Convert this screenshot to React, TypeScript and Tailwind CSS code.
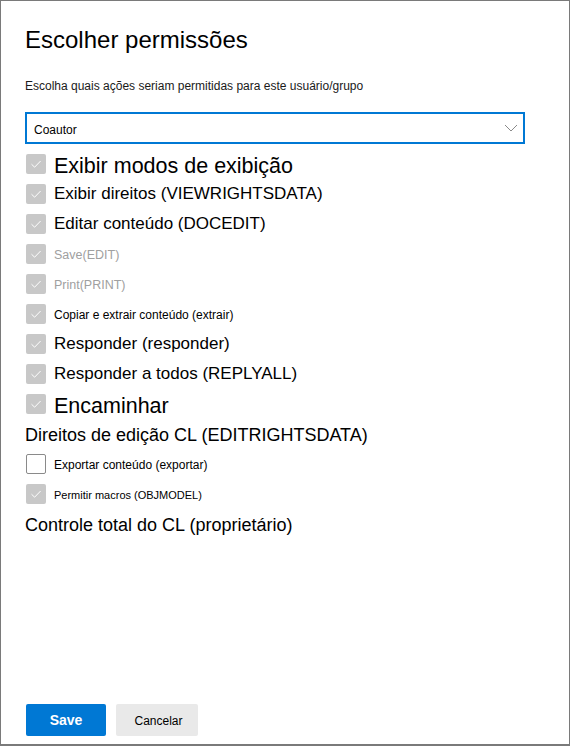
import React from "react";

type Item = {
  label: string;
  size: "lg" | "md" | "sm" | "xs" | "xxs";
  checked?: boolean;
  muted?: boolean;
  header?: boolean;
};

const items: Item[] = [
  { label: "Exibir modos de exibição", size: "lg", checked: true },
  { label: "Exibir direitos (VIEWRIGHTSDATA)", size: "md", checked: true },
  { label: "Editar conteúdo (DOCEDIT)", size: "md", checked: true },
  { label: "Save(EDIT)", size: "sm", checked: true, muted: true },
  { label: "Print(PRINT)", size: "sm", checked: true, muted: true },
  { label: "Copiar e extrair conteúdo (extrair)", size: "xs", checked: true },
  { label: "Responder (responder)", size: "md", checked: true },
  { label: "Responder a todos (REPLYALL)", size: "md", checked: true },
  { label: "Encaminhar", size: "lg", checked: true },
  { label: "Direitos de edição CL (EDITRIGHTSDATA)", size: "md", header: true },
  { label: "Exportar conteúdo (exportar)", size: "xs", checked: false },
  { label: "Permitir macros (OBJMODEL)", size: "xxs", checked: true },
  { label: "Controle total do CL (proprietário)", size: "md", header: true },
];

const sizeClass = {
  lg: "text-[21.5px] pt-[3px]",
  md: "text-[17px]",
  sm: "text-[12.5px] pt-px",
  xs: "text-[12px] pt-px",
  xxs: "text-[11px] pt-px",
};

function Box({ checked }: { checked?: boolean }) {
  if (!checked) {
    return <span className="ml-px w-5 h-5 shrink-0 rounded-[2px] border border-[#8a8a8a] bg-white" />;
  }
  return (
    <span className="ml-px w-5 h-5 shrink-0 rounded-[2px] bg-[#c8c8c8] flex items-center justify-center">
      <svg width="20" height="20" viewBox="0 0 20 20" fill="none">
        <path d="M5.5 10.2 L8.6 13.2 L14.6 7" stroke="#ffffff" strokeWidth="1" />
      </svg>
    </span>
  );
}

export default function App() {
  return (
    <main
      className="w-[570px] h-[746px] bg-white border border-b-2 border-[#7a7a7a] flex flex-col px-6 text-black"
      style={{ fontFamily: '"Liberation Sans", Arial, sans-serif' }}
    >
      <h1 className="mt-[25px] text-[24px] leading-[28px]">Escolher permissões</h1>
      <p className="mt-[24px] text-[12px] leading-4 text-[#1a1a1a]">
        Escolha quais ações seriam permitidas para este usuário/grupo
      </p>

      <div className="mt-[18px] w-[500px] h-8 border-2 border-[#0078d4] flex items-center justify-between pl-[7px] pr-[5px]">
        <span className="text-[12px] pt-[3px]">Coautor</span>
        <svg width="14" height="8" viewBox="0 0 14 8" fill="none">
          <path d="M1 1 L7 7 L13 1" stroke="#8a8a8a" strokeWidth="1" />
        </svg>
      </div>

      <ul className="mt-[10px] flex flex-col gap-[10px]">
        {items.map((item, i) => (
          <li key={i} className="h-5 flex items-center">
            {item.header ? (
              <span className="text-[18px] leading-5 pt-[2px] whitespace-nowrap">{item.label}</span>
            ) : (
              <>
                <Box checked={item.checked} />
                <span
                  className={`ml-2 leading-5 whitespace-nowrap ${sizeClass[item.size]} ${
                    item.muted ? "text-[#a0a0a0]" : "text-black"
                  }`}
                >
                  {item.label}
                </span>
              </>
            )}
          </li>
        ))}
      </ul>

      <div className="mt-auto mb-[8px] flex gap-[10px] ml-px">
        <button className="w-20 h-8 rounded-[2px] bg-[#0078d4] text-white text-[14px] font-bold">Save</button>
        <button className="w-[82px] h-8 rounded-[2px] bg-[#e9e9e9] text-black text-[12px] pl-[3px] pt-[2px]">
          Cancelar
        </button>
      </div>
    </main>
  );
}
